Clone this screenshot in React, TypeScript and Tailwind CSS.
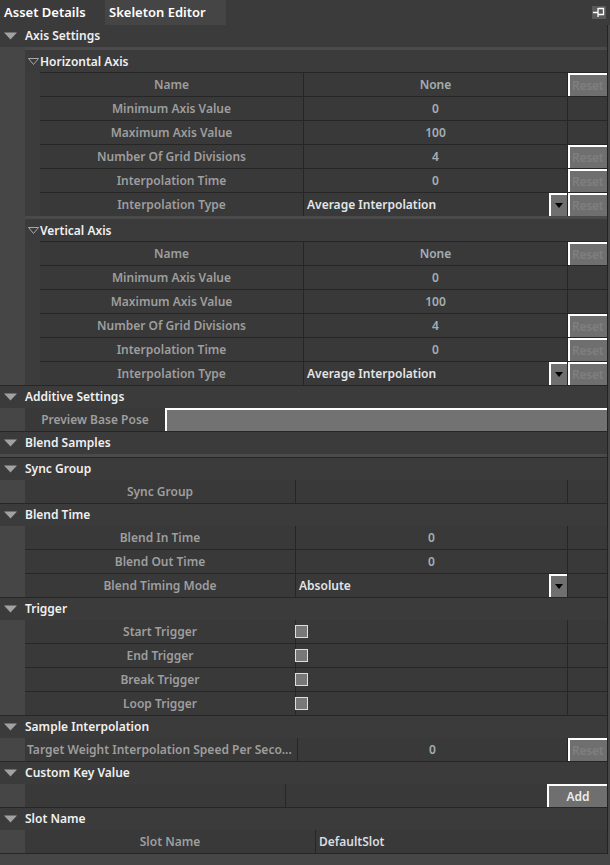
import React from "react";

type Kids = { children?: React.ReactNode };

const Tri = () => (
  <svg width="13" height="8" viewBox="0 0 13 8" className="ml-[4px] shrink-0">
    <path d="M0 0.5 H13 L6.5 7.5 Z" fill="#a2a2a2" />
  </svg>
);

const Header = ({ title, first }: { title: string; first?: boolean }) => (
  <div
    className={`flex items-center bg-[#3b3b3b] ${
      first ? "h-[22px]" : "h-[23px] border-t border-[#262626]"
    }`}
  >
    <Tri />
    <span className="ml-[8px] text-[12px] font-semibold text-[#f0f0f0]">{title}</span>
  </div>
);

const SubHeader = ({ title }: { title: string }) => (
  <div className="flex">
    <div className="w-[25px] shrink-0 bg-[#464646]" />
    <div className="flex-1">
      <div className="h-[3px] bg-[#4a4a4a]" />
      <div className="flex h-[22px] items-center bg-[#3b3b3b] pt-[1px]">
        <svg width="11" height="7" viewBox="0 0 11 7" className="ml-[3px] shrink-0">
          <path d="M0.5 0.5 H10.5 L5.5 6.5 Z" fill="none" stroke="#a8a8a8" strokeWidth="1" />
        </svg>
        <span className="ml-[1px] text-[12px] font-semibold text-[#f0f0f0]">{title}</span>
      </div>
    </div>
  </div>
);

// one property line; sub = nested under a sub category (indent 40)
const Row = ({
  first,
  sub,
  children,
}: Kids & { first?: boolean; sub?: boolean }) => (
  <div className={`flex ${first ? "h-[23px]" : "h-[24px]"}`}>
    <div className="w-[25px] shrink-0 bg-[#464646]" />
    {sub && <div className="w-[15px] shrink-0 bg-[#3c3c3c]" />}
    <div
      className={`flex min-w-0 flex-1 bg-[#393939] ${
        first ? "" : "border-t border-[#262626]"
      }`}
    >
      {children}
    </div>
  </div>
);

const Name = ({ w, text, left }: { w: string; text: string; left?: boolean }) => (
  <div
    className={`flex h-full shrink-0 items-center overflow-hidden whitespace-nowrap border-r border-[#262626] text-[12px] font-semibold text-[#9e9e9e] ${w} ${
      left ? "justify-start pl-[2px]" : "justify-center"
    }`}
  >
    {text}
  </div>
);

const Val = ({ text }: { text?: string }) => (
  <div className="flex h-full flex-1 items-center justify-center border-r border-[#262626] text-[12px] font-semibold text-[#a4aeb4]">
    {text}
  </div>
);

const Combo = ({ text }: { text: string }) => (
  <div className="flex h-full flex-1 items-center border-r border-[#262626]">
    <span className="flex-1 pl-[3px] text-[12px] font-semibold text-[#e4e6e8]">{text}</span>
    <div className="flex h-full w-[18px] shrink-0 items-center justify-center border-l-2 border-t-2 border-white bg-[#6f6f6f]">
      <svg width="8" height="5" viewBox="0 0 8 5">
        <path d="M0 0 H8 L4 5 Z" fill="#000" />
      </svg>
    </div>
  </div>
);

const Reset = ({ on }: { on?: boolean }) => (
  <div className="h-full w-[39px] shrink-0 overflow-hidden">
    {on && (
      <div className="flex h-full w-[44px] items-center border-l-2 border-t-2 border-white bg-[#6f6f6f] pl-[2px] text-[12px] font-semibold tracking-[-0.2px] text-[#7f7f7f]">
        Reset
      </div>
    )}
  </div>
);

const Check = () => (
  <div className="flex h-full flex-1 items-center border-r border-[#262626]">
    <div className="-ml-[1px] h-[13px] w-[13px] border border-[#dedede] bg-[#787878]" />
  </div>
);

const axisRows: [string, React.ReactNode, boolean][] = [
  ["Name", <Val text="None" />, true],
  ["Minimum Axis Value", <Val text="0" />, false],
  ["Maximum Axis Value", <Val text="100" />, false],
  ["Number Of Grid Divisions", <Val text="4" />, true],
  ["Interpolation Time", <Val text="0" />, true],
  ["Interpolation Type", <Combo text="Average Interpolation" />, true],
];

const AxisGroup = ({ title }: { title: string }) => (
  <>
    <SubHeader title={title} />
    {axisRows.map(([name, val, reset]) => (
      <Row sub key={name}>
        <Name w="w-[264px]" text={name} />
        {val}
        <Reset on={reset} />
      </Row>
    ))}
  </>
);

export default function App() {
  return (
    <div className="flex h-[865px] w-[610px] flex-col overflow-hidden bg-[#464646] font-['Noto_Sans','Open_Sans',sans-serif]">
      {/* tab strip */}
      <div className="flex h-[25px] shrink-0 items-center bg-[#3b3b3b]">
        <div className="flex h-full w-[105px] items-center pl-[4px] text-[13px] font-semibold text-white">
          Asset Details
        </div>
        <div className="flex h-full w-[121px] items-center bg-[#454545] pl-[4px] text-[13px] font-semibold text-white">
          Skeleton Editor
        </div>
        <div className="ml-auto mr-[4px] flex h-[13px] w-[14px] items-center justify-center bg-[#5a5a5a]">
          <svg width="12" height="11" viewBox="0 0 12 11">
            <path d="M0 5.5 H5 M5 1 V10 M5 1.5 H10.5 V7.5 H5" fill="none" stroke="#fff" strokeWidth="1.3" />
          </svg>
        </div>
      </div>

      <div className="w-[608px] border-r border-[#232323]">
        <Header title="Axis Settings" first />
        <AxisGroup title="Horizontal Axis" />
        <AxisGroup title="Vertical Axis" />

        <Header title="Additive Settings" />
        <Row first>
          <div className="flex h-full w-[140px] shrink-0 items-center justify-center text-[12px] font-semibold text-[#9e9e9e]">
            Preview Base Pose
          </div>
          <div className="h-full flex-1 border-l-2 border-t-2 border-white bg-[#727272]" />
        </Row>

        <Header title="Blend Samples" />
        <div className="h-[3px] bg-[#4a4a4a]" />

        <Header title="Sync Group" />
        <Row first>
          <Name w="w-[271px]" text="Sync Group" />
          <Val />
          <Reset />
        </Row>

        <Header title="Blend Time" />
        <Row first>
          <Name w="w-[271px]" text="Blend In Time" />
          <Val text="0" />
          <Reset />
        </Row>
        <Row>
          <Name w="w-[271px]" text="Blend Out Time" />
          <Val text="0" />
          <Reset />
        </Row>
        <Row>
          <Name w="w-[271px]" text="Blend Timing Mode" />
          <Combo text="Absolute" />
          <Reset />
        </Row>

        <Header title="Trigger" />
        {["Start Trigger", "End Trigger", "Break Trigger", "Loop Trigger"].map((t, i) => (
          <Row first={i === 0} key={t}>
            <Name w="w-[271px]" text={t} />
            <Check />
            <Reset />
          </Row>
        ))}

        <Header title="Sample Interpolation" />
        <Row first>
          <Name w="w-[273px]" text="Target Weight Interpolation Speed Per Seco..." left />
          <Val text="0" />
          <Reset on />
        </Row>

        <Header title="Custom Key Value" />
        <Row first>
          <div className="h-full w-[261px] shrink-0 border-r border-[#262626]" />
          <div className="flex h-full flex-1 justify-end">
            <div className="flex h-full w-[60px] items-center justify-center border-l-2 border-t-2 border-white bg-[#6f6f6f] text-[12px] font-semibold text-[#ececec]">
              Add
            </div>
          </div>
        </Row>

        <Header title="Slot Name" />
        <Row first>
          <Name w="w-[291px]" text="Slot Name" />
          <div className="flex h-full flex-1 items-center pl-[3px] text-[12px] font-semibold text-[#d8dde0]">
            DefaultSlot
          </div>
        </Row>
        <div className="border-t border-[#262626]" />
      </div>
    </div>
  );
}
